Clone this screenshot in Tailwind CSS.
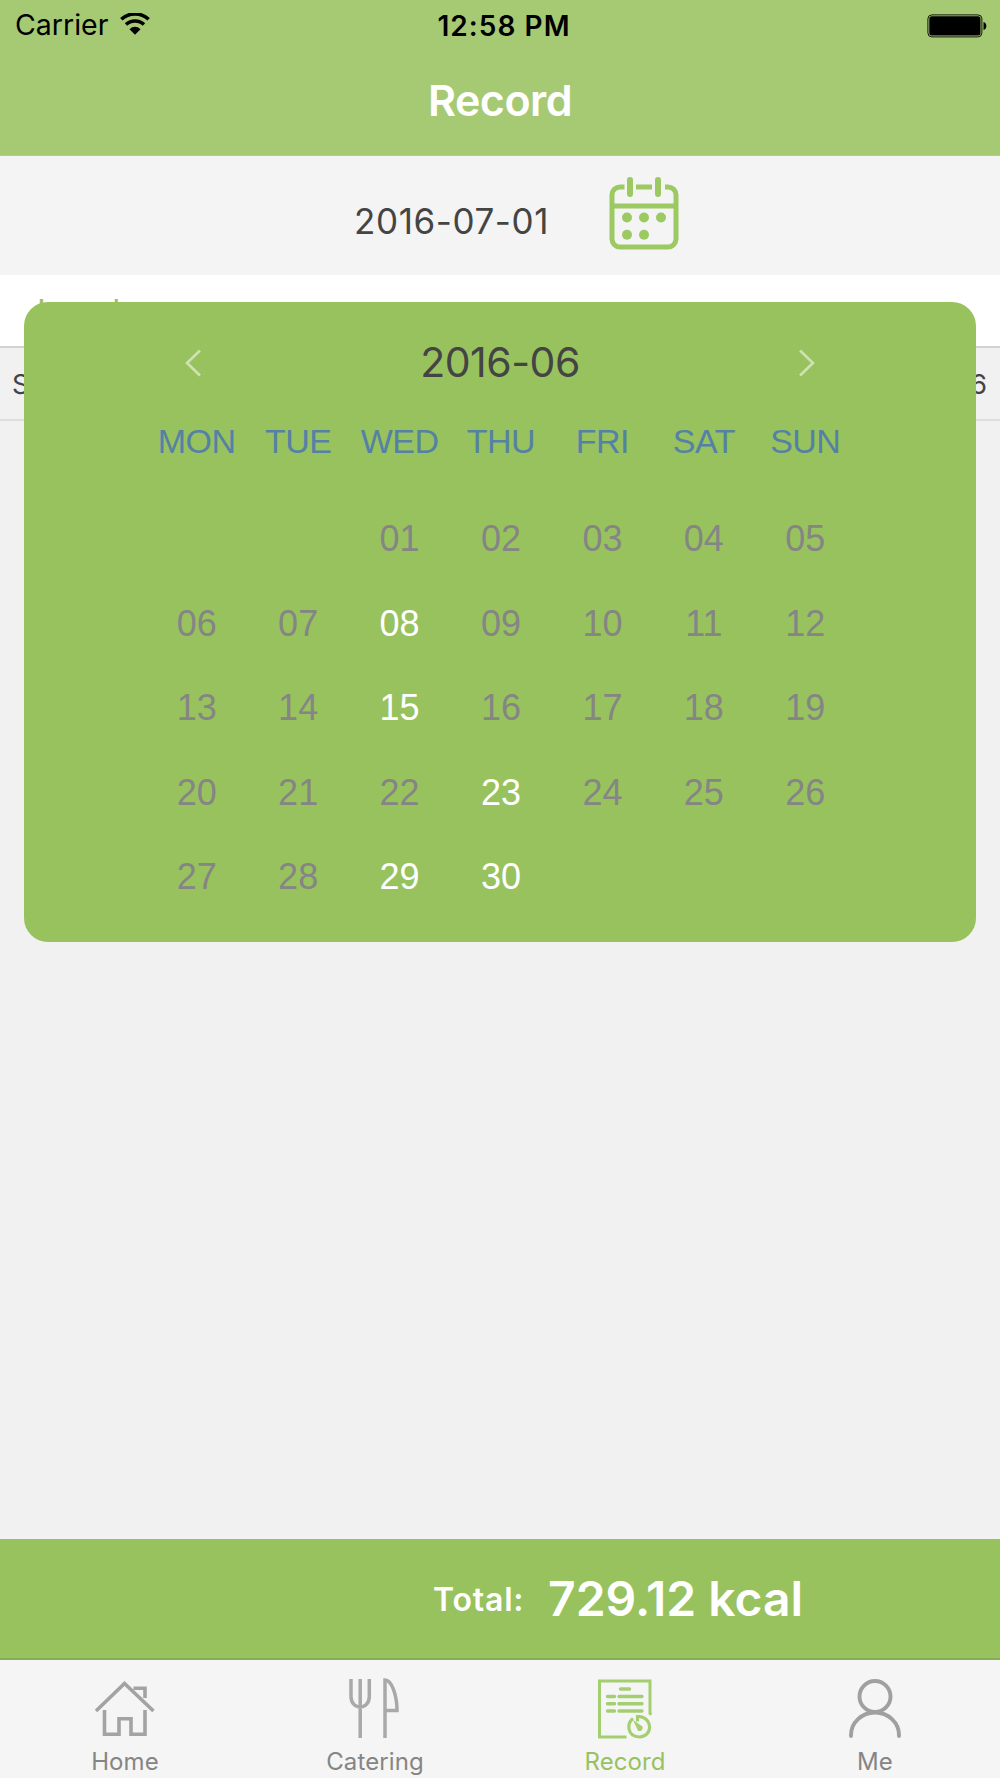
<!DOCTYPE html>
<html lang="en">
<head>
    <meta charset="UTF-8">
    <meta name="viewport" content="width=device-width, initial-scale=1.0">
    <title>Record</title>
    <script src="https://cdn.jsdelivr.net/npm/@tailwindcss/browser@4"></script>
</head>
<body class="bg-[#f1f1f1] font-['Inter',sans-serif]">
    <div class="relative w-[1000px] h-[1778px] flex flex-col overflow-hidden">
        <!-- Header -->
        <header class="h-[156px] bg-[#a6ca74] border-b border-[#b9c3ac] shrink-0">
            <div class="h-[51px] grid grid-cols-3 items-center text-[28.5px] text-black">
                <div class="flex items-center pl-[15px] gap-[12px]">
                    <span>Carrier</span>
                    <svg class="w-[30px] h-[22px] -mt-[4px]" viewBox="0 0 30 22" fill="none" stroke="#000">
                        <path d="M1.3 6.3C9 -0.8 21 -0.8 28.7 6.3" stroke-width="3.6"/>
                        <path d="M6 11.6C11 6.8 19 6.8 24 11.6" stroke-width="3.4"/>
                        <path d="M9.5 16.3C12.6 13 17.4 13 20.5 16.3L15 21.7Z" fill="#000" stroke="none"/>
                    </svg>
                </div>
                <div class="pl-[8px] text-center font-semibold text-[28px] tracking-[1.05px]">12:58 PM</div>
                <div class="flex justify-end pr-[13px]">
                    <svg class="w-[60px] h-[24px]" viewBox="0 0 60 24">
                        <rect x="0.9" y="0.9" width="54" height="22" rx="4" fill="none" stroke="#000" stroke-width="0.9"/>
                        <rect x="2.3" y="2.3" width="51.2" height="19.2" rx="2.5"/>
                        <path d="M56.5 8C60.3 9 60.3 15 56.5 16Z"/>
                    </svg>
                </div>
            </div>
            <h1 class="h-[104px] leading-[99px] text-center text-white font-semibold text-[43px] tracking-[-0.5px]">Record</h1>
        </header>

        <!-- Date picker bar -->
        <div class="h-[119px] bg-[#f4f4f4] flex shrink-0 pl-[354px]">
            <span class="w-[254px] pt-[39px] leading-[52px] text-[35px] tracking-[0.6px] text-[#444]">2016-07-01</span>
            <svg class="w-[72px] h-[74px] mt-[20px]" viewBox="0 0 72 74" fill="none" stroke="#9dc963" stroke-width="5">
                <path d="M16.5 11H12A8 8 0 0 0 4 19V63A8 8 0 0 0 12 71H60A8 8 0 0 0 68 63V19A8 8 0 0 0 60 11H57M28 11H44M4 30H68"/>
                <path d="M22 4V18M50 4V18" stroke-width="6" stroke-linecap="round"/>
                <g fill="#9dc963" stroke="none">
                    <circle cx="19" cy="41.5" r="5"/><circle cx="36" cy="41.5" r="5"/><circle cx="53" cy="41.5" r="5"/>
                    <circle cx="19" cy="58.7" r="5"/><circle cx="36" cy="58.7" r="5"/>
                </g>
            </svg>
        </div>

        <!-- Meal list -->
        <div class="h-[73px] bg-white border-b-2 border-[#d2d2d2] shrink-0 pl-[37px] pt-[14px] leading-[44px] text-[33px] tracking-[-0.3px] text-[#98c25e]">Lunch</div>
        <div class="h-[73px] border-b-2 border-[#dedede] shrink-0 flex justify-between pl-[12px] pr-[13px] leading-[73px] text-[27px] text-[#444]">
            <span>S</span>
            <span>6</span>
        </div>

        <!-- Total -->
        <div class="mt-auto h-[121px] bg-[#98c25e] border-b-2 border-[#88ad59] shrink-0 flex text-white font-semibold">
            <span class="w-[115px] ml-[433px] leading-[121px] text-[32px] tracking-[0.8px]">Total:</span>
            <span class="leading-[120px] text-[48px]">729.12 kcal</span>
        </div>

        <!-- Tabs -->
        <nav class="h-[118px] bg-[#f5f5f5] shrink-0 grid grid-cols-4 text-center text-[24px] leading-[30px] tracking-[0.1px] text-[#858585]">
            <div class="flex flex-col items-center pt-[18px]">
                <svg class="w-[60px] h-[62px]" viewBox="0 0 60 62" fill="none" stroke="#a3a3a3" stroke-width="3.6">
                    <path d="M1 33L29.5 5.5L58.5 33M38.500 10.300H50V20M9.5 32V56.3H24V40.7H36V56.3H50V32"/>
                </svg>
                <span class="mt-[7px]">Home</span>
            </div>
            <div class="flex flex-col items-center pt-[18px]">
                <svg class="w-[60px] h-[62px]" viewBox="1 0 60 62" fill="none" stroke="#a9a9a9" stroke-width="3.5">
                    <path d="M7 1V18.5C7 32.5 25.3 32.5 25.3 18.5V1M16.2 1V60M41 60V2C48 2 53 18 53 32.5H41"/>
                </svg>
                <span class="mt-[7px]">Catering</span>
            </div>
            <div class="flex flex-col items-center pt-[18px] text-[#98c25e]">
                <svg class="w-[60px] h-[62px]" viewBox="0.5 0.5 60 62" fill="none" stroke="#a4cf70" stroke-width="3">
                    <path d="M32 59.5H5V3.5H55.5V36L57 37"/>
                    <path d="M26 11.5H35M13 19H20M24.5 19H47.5M13 26.3H20M24.5 26.3H47.5M13 33.5H20M24.5 33.5H47.5" stroke-width="3.4" stroke-linecap="round"/>
                    <path d="M38.5 41C32 46 32.5 59.2 45 59.5C58 59.2 59 41 45 39H43V44" stroke-width="3.2"/>
                    <path d="M38.5 42.5L48 49A3.3 3.3 0 0 1 43.5 53.2Z" fill="#a4cf70" stroke="none"/>
                </svg>
                <span class="mt-[7px]">Record</span>
            </div>
            <div class="flex flex-col items-center pt-[18px]">
                <svg class="w-[60px] h-[62px]" viewBox="0 0 60 62" fill="none" stroke="#a0a0a0" stroke-width="3.9">
                    <circle cx="30" cy="18.5" r="15.5"/>
                    <path d="M6 58V57A24 22.5 0 0 1 54 57V58" stroke-linecap="round"/>
                </svg>
                <span class="mt-[7px]">Me</span>
            </div>
        </nav>

        <!-- Calendar popup -->
        <div class="absolute left-[24px] top-[302px] w-[952px] h-[640px] rounded-[24px] bg-[#98c25e] pl-[122px] pr-[120px]">
            <div class="h-[121px] flex items-center justify-between pl-[39px] pr-[41px]">
                <svg class="w-[16px] h-[28px]" viewBox="0 0 16 28" fill="none" stroke="#cfe2b4" stroke-width="2.6"><path d="M15 1.5L2 14L15 26.5"/></svg>
                <span class="text-[41px] tracking-[-0.5px] text-[#444]">2016-06</span>
                <svg class="w-[16px] h-[28px]" viewBox="0 0 16 28" fill="none" stroke="#cfe2b4" stroke-width="2.6"><path d="M1 1.5L14 14L1 26.5"/></svg>
            </div>
            <div class="grid grid-cols-7 h-[74px] -mt-[19px] leading-[74px] text-center font-['Liberation_Sans',sans-serif] text-[34px] tracking-[-0.5px] text-[#5581a5]">
                <span>MON</span><span>TUE</span><span>WED</span><span>THU</span><span>FRI</span><span>SAT</span><span>SUN</span>
            </div>
            <div id="days" class="grid grid-cols-7 mt-[19px] text-center font-['Liberation_Sans',sans-serif] text-[36px] leading-[84.5px] text-[#858585]">
                <span></span><span></span>
            </div>
        </div>
    </div>

    <script>
        const marked = [8, 15, 23, 29, 30];
        const days = document.getElementById('days');

        for (let i = 1; i <= 30; i++) {
            const cell = document.createElement('span');
            cell.textContent = i.toString().padStart(2, '0');
            if (marked.includes(i)) {
                cell.className = 'text-white';
            }
            days.appendChild(cell);
        }
    </script>
</body>
</html>
